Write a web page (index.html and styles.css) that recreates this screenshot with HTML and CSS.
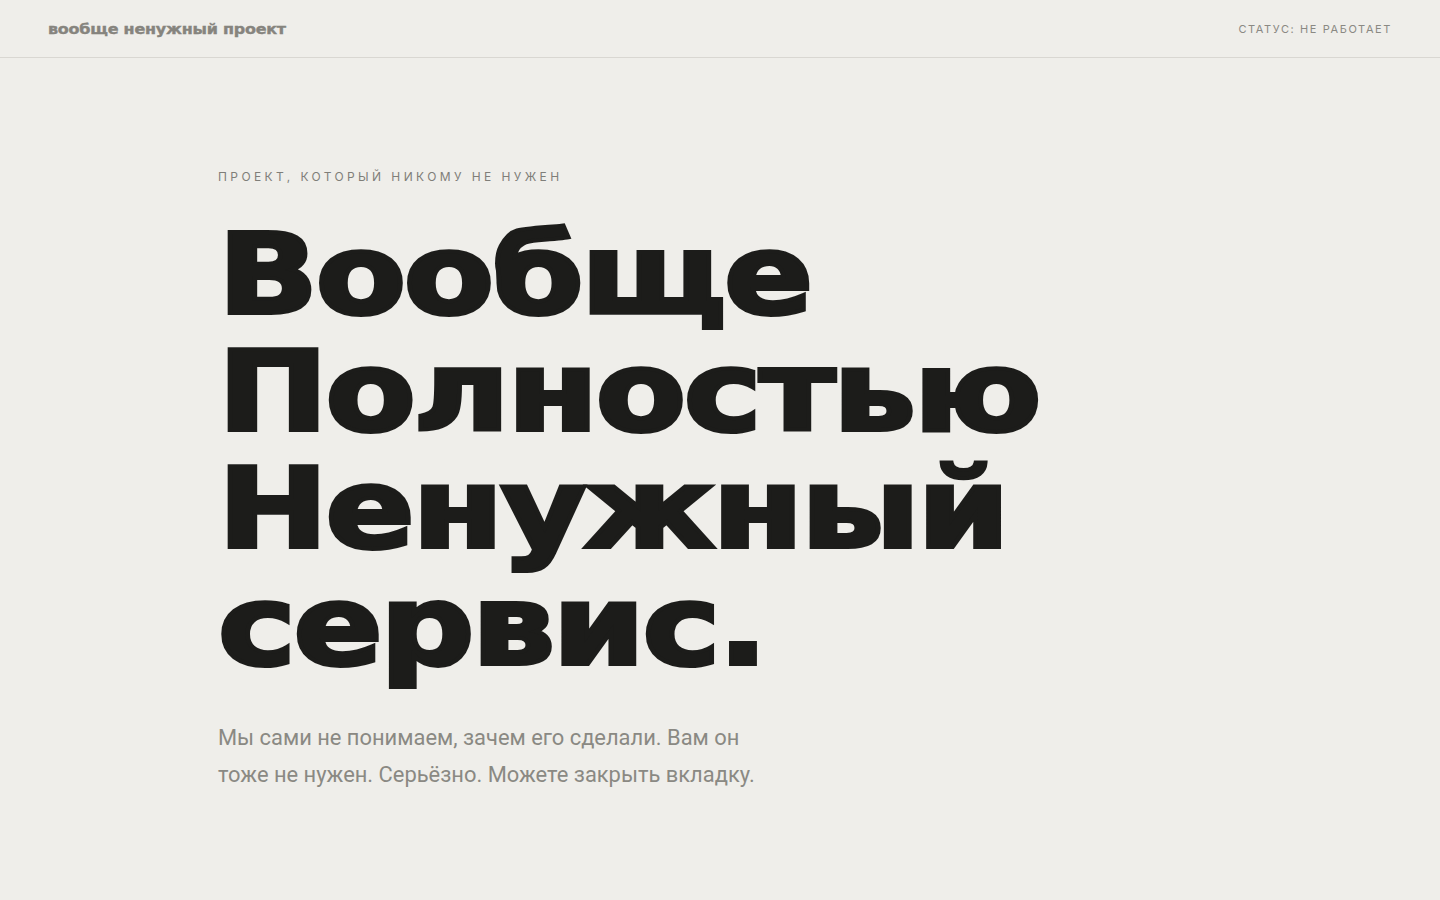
FILE: index.html
```html
<!DOCTYPE html>
<html lang="ru">
<head>
<meta charset="utf-8">
<title>вообще ненужный проект</title>
<link rel="stylesheet" href="styles.css">
</head>
<body>
<header class="topbar">
  <div class="logo">вообще ненужный проект</div>
  <div class="status">СТАТУС: НЕ РАБОТАЕТ</div>
</header>
<main class="hero">
  <p class="eyebrow">ПРОЕКТ, КОТОРЫЙ НИКОМУ НЕ НУЖЕН</p>
  <h1 class="title">
    <span class="line">Вообще</span>
    <span class="line">Полностью</span>
    <span class="line">Ненужный</span>
    <span class="line">сервис.</span>
  </h1>
  <p class="lead">Мы сами не понимаем, зачем его сделали. Вам он<br>тоже не нужен. Серьёзно. Можете закрыть вкладку.</p>
</main>
</body>
</html>
```
FILE: styles.css
```css
* { box-sizing: border-box; }
html, body { margin: 0; padding: 0; }
body {
  background: #efeeea;
  color: #1c1c1a;
  font-family: "Roboto", "Liberation Sans", sans-serif;
  min-height: 900px;
  overflow: hidden;
}
.topbar {
  height: 58px;
  display: flex;
  align-items: center;
  justify-content: space-between;
  padding: 0 48px 0 48px;
  border-bottom: 1px solid #d9d7d2;
}
.logo {
  font-family: "DejaVu Sans", sans-serif;
  font-weight: 700;
  font-size: 14px;
  color: #86847e;
  -webkit-text-stroke: 0.4px #86847e;
  transform: scaleX(1.14);
  transform-origin: left center;
  letter-spacing: -0.2px;
}
.status {
  font-family: "Inter", "Liberation Sans", sans-serif;
  font-size: 11px;
  letter-spacing: 1.6px;
  color: #8a8983;
}
.hero {
  padding: 111px 0 0 218px;
}
.eyebrow {
  margin: 0;
  font-family: "Inter", "Liberation Sans", sans-serif;
  font-size: 12px;
  line-height: 16px;
  letter-spacing: 3.4px;
  color: #7f7e79;
}
.title {
  margin: 32px 0 0 0;
  width: max-content;
  font-family: "DejaVu Sans", sans-serif;
  font-weight: 700;
  font-size: 110px;
  line-height: 117px;
  letter-spacing: -2px;
  color: #1c1c1a;
  -webkit-text-stroke: 4px #1c1c1a;
  transform: scaleX(1.195);
  transform-origin: left top;
}
.line { display: block; white-space: nowrap; }
.lead {
  margin: 34px 0 0 0;
  font-family: "Roboto", "Liberation Sans", sans-serif;
  font-size: 21.9px;
  line-height: 37px;
  color: #8a8983;
}
```
